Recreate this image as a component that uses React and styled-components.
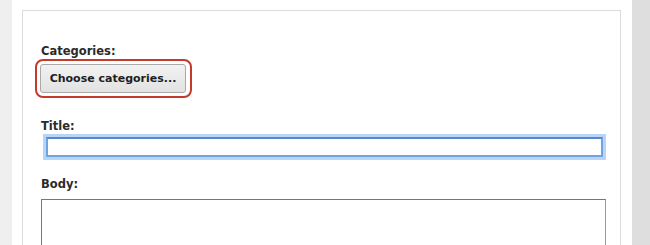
import styled, { createGlobalStyle } from "styled-components";

const GlobalStyle = createGlobalStyle`
  html, body {
    margin: 0;
    padding: 0;
    background: #ffffff;
    overflow: hidden;
  }
  body {
    font-family: "DejaVu Sans", Verdana, sans-serif;
  }
`;

const Page = styled.div`
  display: flex;
  height: 245px;
  overflow: hidden;
`;

const SideStrip = styled.div`
  flex: 0 0 ${(props) => props.width}px;
  background: ${(props) => props.color};
  margin-right: ${(props) => props.gap || 0}px;
  margin-left: ${(props) => props.lead || 0}px;
`;

const Panel = styled.div`
  flex: 0 0 598px;
  box-sizing: border-box;
  margin-top: 10px;
  height: 260px;
  border: 1px solid #dcdcdc;
  padding: 34px 14px 0 18px;
`;

const Field = styled.div`
  display: flex;
  flex-direction: column;
  align-items: flex-start;
  margin-bottom: ${(props) => props.spacing}px;
`;

const Label = styled.label`
  font-size: 11.5px;
  line-height: 13px;
  font-weight: bold;
  color: #2a2a2a;
  margin-bottom: ${(props) => props.spacing}px;
`;

const Highlight = styled.div`
  margin-left: -6px;
  padding: 3px 4px 3px 3px;
  border: 2px solid #c63a2b;
  border-radius: 8px;
`;

const ChooseButton = styled.button`
  display: block;
  width: 146px;
  height: 29px;
  padding: 0;
  font-family: "DejaVu Sans", Verdana, sans-serif;
  font-size: 11px;
  font-weight: bold;
  color: #1e1e1e;
  background: linear-gradient(#f2f2f2, #e2e2e2);
  border: 1px solid #a9a9a9;
  border-radius: 3px;
`;

const TitleInput = styled.input`
  box-sizing: border-box;
  width: 557px;
  height: 20px;
  margin-left: 5px;
  border: 2px solid #6ea3e6;
  border-top-color: #5788c8;
  box-shadow: 0 0 0 3px #b8d4f8;
  outline: none;
  background: #ffffff;
`;

const BodyArea = styled.textarea`
  box-sizing: border-box;
  width: 565px;
  height: 80px;
  border: 1px solid #9a9a9a;
  border-top-color: #777777;
  border-left-color: #777777;
  resize: none;
  background: #ffffff;
`;

export default function App() {
  return (
    <>
      <GlobalStyle />
      <Page>
        <SideStrip width={12} color="#efefef" gap={10} />
        <Panel>
          <Field spacing={22}>
            <Label spacing={1}>Categories:</Label>
            <Highlight>
              <ChooseButton type="button">Choose categories...</ChooseButton>
            </Highlight>
          </Field>
          <Field spacing={21}>
            <Label spacing={4}>Title:</Label>
            <TitleInput type="text" />
          </Field>
          <Field spacing={0}>
            <Label spacing={8}>Body:</Label>
            <BodyArea />
          </Field>
        </Panel>
        <SideStrip width={19} color="#dedede" lead={11} />
      </Page>
    </>
  );
}
